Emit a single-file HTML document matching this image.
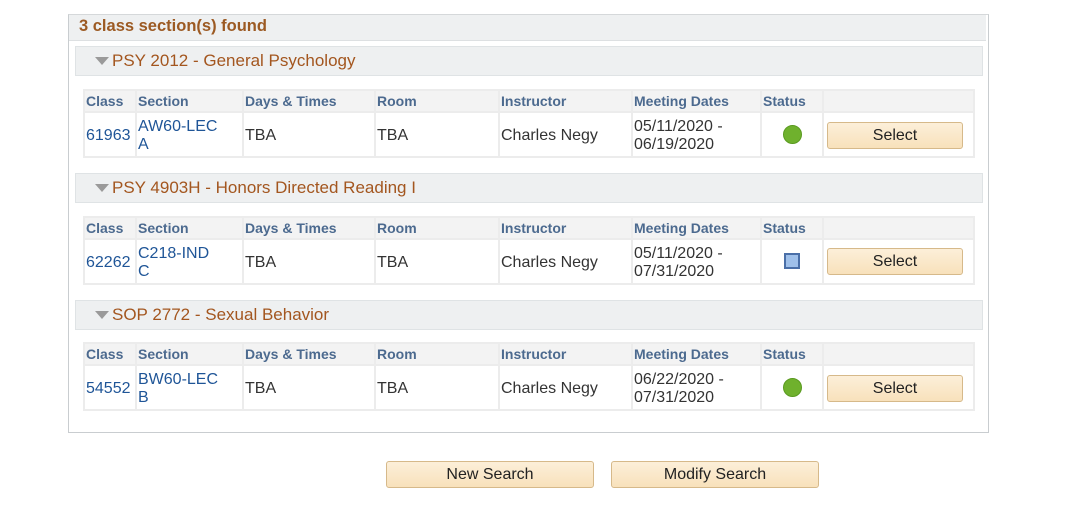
<!DOCTYPE html>
<html><head><style>
body{margin:0;width:1068px;height:513px;background:#fff;font-family:"Liberation Sans",Arial,sans-serif;position:relative;overflow:hidden}
.a{position:absolute}
.outer{left:68px;top:14px;width:919px;height:417px;border:1px solid #c9cdd0;border-top-color:#d5d8da}
.hdr{left:69px;top:15px;width:917px;height:25px;background:#eef0f1;border-bottom:1px solid #dde0e2}
.hdr span{position:absolute;left:10px;top:2px;font-size:16.5px;font-weight:bold;color:#9c5a23}
.grp{left:75px;width:906px;height:28px;background:#eef0f1;border:1px solid #dfe3e5}
.grp .t{position:absolute;left:19px;top:10px;width:0;height:0;border-left:7px solid transparent;border-right:7px solid transparent;border-top:8px solid #9a9a9a}
.grp span{position:absolute;left:36px;top:4px;font-size:17px;color:#a3561f}
table{position:absolute;left:83px;width:890px;table-layout:fixed;border-collapse:collapse;font-size:16px}
td,th{border:2px solid #ececec;padding:0 0 0 1px;text-align:left;vertical-align:middle;overflow:hidden;white-space:nowrap}
th{background:#f3f3f3;height:20px;color:#4c6a8f;font-size:14px;font-weight:bold}
td{height:41px;color:#333;line-height:18px;padding-top:2px}
.l{color:#1f5597}
.btn{position:absolute;background:linear-gradient(#fcefd9,#f8e1bb);border:1px solid #d6b98a;border-radius:3px;box-sizing:border-box;text-align:center;font-size:16px;color:#222;line-height:25px}
.dot{display:inline-block;width:19px;height:19px;border-radius:50%;background:#6fb12d;border:1px solid #5a9a20;box-sizing:border-box;vertical-align:middle}
.sq{display:inline-block;width:16px;height:16px;background:#9fc0ea;border:2px solid #4a6fa8;box-sizing:border-box;vertical-align:middle}
</style></head><body>
<div class="a outer"></div>
<div class="a hdr"><span>3 class section(s) found</span></div>

<div class="a grp" style="top:46px"><div class="t"></div><span>PSY 2012 - General Psychology</span></div>
<table style="top:89px">
<colgroup><col style="width:52px"><col style="width:107px"><col style="width:132px"><col style="width:124px"><col style="width:133px"><col style="width:129px"><col style="width:62px"><col style="width:151px"></colgroup>
<tr><th>Class</th><th>Section</th><th>Days &amp; Times</th><th>Room</th><th>Instructor</th><th>Meeting Dates</th><th>Status</th><th></th></tr>
<tr><td class="l">61963</td><td class="l">AW60-LEC<br>A</td><td>TBA</td><td>TBA</td><td>Charles Negy</td><td>05/11/2020 -<br>06/19/2020</td><td style="text-align:center;padding:0"><span class="dot"></span></td><td></td></tr>
</table>
<div class="btn" style="left:827px;top:122px;width:136px;height:27px">Select</div>

<div class="a grp" style="top:173px"><div class="t"></div><span>PSY 4903H - Honors Directed Reading I</span></div>
<table style="top:216px">
<colgroup><col style="width:52px"><col style="width:107px"><col style="width:132px"><col style="width:124px"><col style="width:133px"><col style="width:129px"><col style="width:62px"><col style="width:151px"></colgroup>
<tr><th>Class</th><th>Section</th><th>Days &amp; Times</th><th>Room</th><th>Instructor</th><th>Meeting Dates</th><th>Status</th><th></th></tr>
<tr><td class="l">62262</td><td class="l">C218-IND<br>C</td><td>TBA</td><td>TBA</td><td>Charles Negy</td><td>05/11/2020 -<br>07/31/2020</td><td style="text-align:center;padding:0"><span class="sq"></span></td><td></td></tr>
</table>
<div class="btn" style="left:827px;top:248px;width:136px;height:27px">Select</div>

<div class="a grp" style="top:300px"><div class="t"></div><span>SOP 2772 - Sexual Behavior</span></div>
<table style="top:342px">
<colgroup><col style="width:52px"><col style="width:107px"><col style="width:132px"><col style="width:124px"><col style="width:133px"><col style="width:129px"><col style="width:62px"><col style="width:151px"></colgroup>
<tr><th>Class</th><th>Section</th><th>Days &amp; Times</th><th>Room</th><th>Instructor</th><th>Meeting Dates</th><th>Status</th><th></th></tr>
<tr><td class="l">54552</td><td class="l">BW60-LEC<br>B</td><td>TBA</td><td>TBA</td><td>Charles Negy</td><td>06/22/2020 -<br>07/31/2020</td><td style="text-align:center;padding:0"><span class="dot"></span></td><td></td></tr>
</table>
<div class="btn" style="left:827px;top:375px;width:136px;height:27px">Select</div>

<div class="btn" style="left:386px;top:461px;width:208px;height:27px">New Search</div>
<div class="btn" style="left:611px;top:461px;width:208px;height:27px">Modify Search</div>
</body></html>
